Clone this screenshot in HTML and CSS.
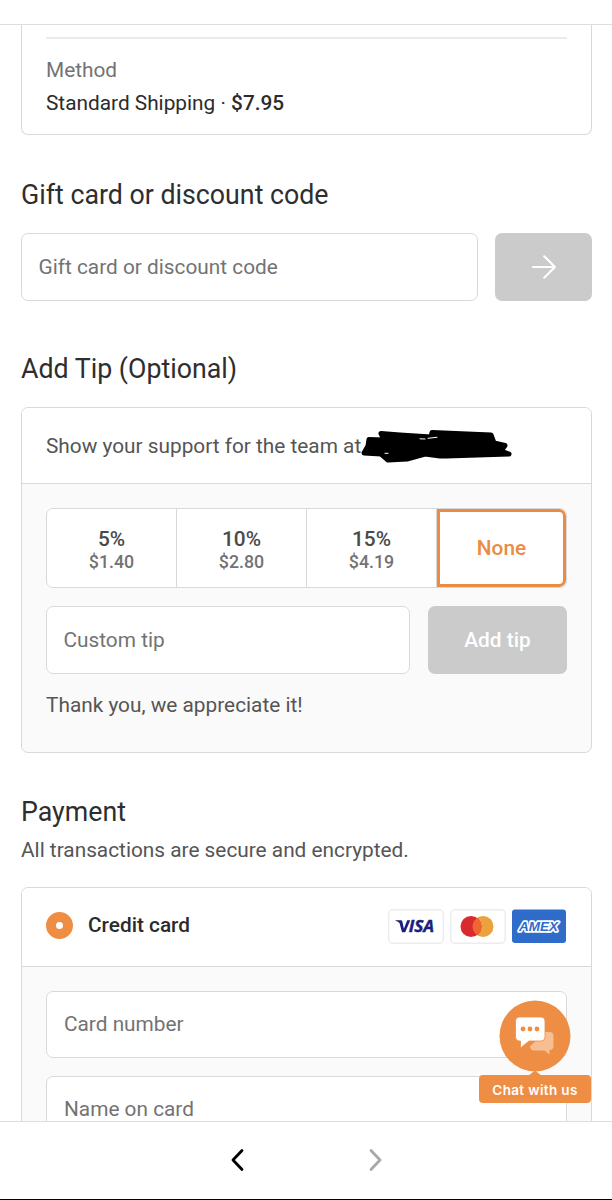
FILE: index.html
```html
<!DOCTYPE html>
<html lang="en">
<head>
<meta charset="utf-8">
<title>Checkout</title>
<link rel="stylesheet" href="styles.css">
</head>
<body>
<div class="screen">
  <div class="topbar"></div>
  <main class="content">
    <section class="shipping">
      <div class="divider"></div>
      <div class="label">Method</div>
      <div class="value">Standard Shipping · <b>$7.95</b></div>
    </section>

    <h2 class="heading gift-heading">Gift card or discount code</h2>
    <div class="row">
      <div class="field">Gift card or discount code</div>
      <button class="btn apply" aria-label="Apply">
        <svg width="26" height="26" viewBox="0 0 26 26" fill="none" stroke="#fff" stroke-width="2.200" stroke-linecap="round" stroke-linejoin="round"><path d="M2 13H24M13.200 2.300L24 13L13.200 23.700"/></svg>
      </button>
    </div>

    <h2 class="heading tip-heading">Add Tip (Optional)</h2>
    <section class="panel tip">
      <div class="tip-head"><span>Show your support for the team at</span>
        <svg class="scribble" width="152" height="34" viewBox="361 429 152 34" fill="none" stroke="#000" stroke-linecap="round" stroke-linejoin="round"><path stroke-width="5" d="M364 453L368 446L369 439.500L384 440L381 433.500L400 435L431 437L432 432.500L491 435L494 443L505 445.500L501 451L509 454L446 456L440 456L425 454L407 459L388 460L381 454Z" fill="#000"/><path stroke="#fff" stroke-width="1" d="M420 438.800L425 439M428 438.300L437 437.300M385 453.300H388"/></svg>
      </div>
      <div class="tip-body">
        <div class="segments">
          <div class="seg"><b>5%</b><span>$1.40</span></div>
          <div class="seg"><b>10%</b><span>$2.80</span></div>
          <div class="seg"><b>15%</b><span>$4.19</span></div>
          <div class="seg active">None</div>
        </div>
        <div class="row custom">
          <div class="field">Custom tip</div>
          <button class="btn add">Add tip</button>
        </div>
        <p class="thanks">Thank you, we appreciate it!</p>
      </div>
    </section>

    <h2 class="heading pay-heading">Payment</h2>
    <p class="sub">All transactions are secure and encrypted.</p>
    <section class="panel pay">
      <div class="pay-head">
        <span class="radio"></span>
        <span class="pay-name">Credit card</span>
        <div class="brands">
          <svg width="56" height="35" viewBox="0 0 56 35"><rect x=".75" y=".75" width="54.500" height="33.500" rx="4" fill="#fff" stroke="#ececef" stroke-width="1.500"/><path d="M7.500 11.300H13Q14 11.300 14.300 12.200L15.900 19.700L19.200 11.300H22.300L17.200 23.200H14L11.500 13.900Q10.300 12.500 7.500 11.800Z" fill="#1a1f80"/><text class="visa" x="20.700" y="23.300" textLength="25.500" lengthAdjust="spacingAndGlyphs">ISA</text></svg>
          <svg width="56" height="35" viewBox="0 0 56 35"><rect x=".75" y=".75" width="54.500" height="33.500" rx="4" fill="#fff" stroke="#ececef" stroke-width="1.500"/><circle cx="33" cy="17.500" r="10.500" fill="#eba13d"/><circle cx="21" cy="17.500" r="10.500" fill="#d92b2e"/><path d="M27 8.900A10.500 10.500 0 0 1 27 26.100A10.500 10.500 0 0 1 27 8.900Z" fill="#ef6630"/></svg>
          <svg width="54" height="35" viewBox="0 0 54 35"><rect y=".5" width="54" height="33.500" rx="3" fill="#2f6bc9"/><text class="amex outline" x="7" y="22" textLength="39" lengthAdjust="spacingAndGlyphs">AMEX</text></svg>
        </div>
      </div>
      <div class="pay-body">
        <div class="field card">Card number</div>
        <div class="field card">Name on card</div>
      </div>
    </section>
  </main>
  <nav class="bottombar">
    <svg width="14" height="24" viewBox="0 0 14 24" fill="none" stroke="#000" stroke-width="2.800" stroke-linecap="round" stroke-linejoin="round"><path d="M12 2.500L3 12L12 21.500"/></svg>
    <svg width="14" height="24" viewBox="0 0 14 24" fill="none" stroke="#a8a8a8" stroke-width="2.800" stroke-linecap="round" stroke-linejoin="round"><path d="M2 2.500L11 12L2 21.500"/></svg>
  </nav>
  <div class="chat">
    <svg width="72" height="75" viewBox="0 0 72 75"><circle cx="36" cy="36" r="35.500" fill="#ee8e45"/><path d="M29 76L36 70.500L43 76Z" fill="#ee8e45"/><path d="M46 32H50.500Q54.500 32 54.500 36V46Q54.500 50 50.500 50V54.500L45.500 50.500H35Q31.500 50.500 31 46.500Z" fill="#f7be92"/><path d="M20.500 17H42Q46 17 46 21V37Q46 41 42 41H30L21.500 48V41H20.500Q16.500 41 16.500 37V21Q16.500 17 20.500 17Z" fill="#fff" stroke="#ee8e45" stroke-width=".8"/><g fill="#ee8e45"><circle cx="24" cy="29" r="2.400"/><circle cx="31" cy="29" r="2.400"/><circle cx="38" cy="29" r="2.400"/></g></svg>
    <div class="chat-label">Chat with us</div>
  </div>
</div>
</body>
</html>
```
FILE: styles.css
```css
* { box-sizing: border-box; }
body { margin: 0; background: #fff; font-family: Roboto, "Liberation Sans", sans-serif; font-size: 20.820px; color: #2b2b2b; }
h2, p { margin: 0; }
b { font-weight: 500; }
.screen { position: relative; width: 612px; height: 1200px; display: flex; flex-direction: column; overflow: hidden; }
.topbar { height: 25px; flex: none; border-bottom: 1px solid #dedede; }
.content { flex: 1; min-height: 0; overflow: hidden; padding: 0 20px 0 21px; }
.shipping { height: 110px; border: 1px solid #d9d9d9; border-top: 0; border-radius: 0 0 7px 7px; padding: 12px 24px 0; }
.divider { height: 2px; background: #ebebeb; margin-bottom: 15px; }
.label, .value { line-height: 33px; }
.label { color: #737373; }
.heading { font-size: 26.750px; font-weight: 400; line-height: 32px; color: #2e2e2e; }
.gift-heading { margin: 44px 0 22px; }
.row { display: flex; gap: 17px; }
.field { flex: 1; height: 68px; display: flex; align-items: center; padding: 0 16.500px 1px; background: #fff; border: 1px solid #d9d9d9; border-radius: 7px; color: #737373; }
.btn { height: 68px; padding: 0; border: 0; border-radius: 7px; background: #cbcbcb; color: #fff; font: 500 20.820px Roboto, sans-serif; display: flex; align-items: center; justify-content: center; }
.apply { width: 97px; }
.tip-heading { margin: 52px 0 22px; }
.panel { border: 1px solid #d9d9d9; border-radius: 7px; background: #fafafa; overflow: hidden; }
.tip { height: 346px; }
.tip-head { height: 76px; padding-left: 24px; display: flex; align-items: center; background: #fff; border-bottom: 1px solid #d9d9d9; color: #555; white-space: nowrap; }
.scribble { flex: none; }
.tip-body { padding: 24px; }
.segments { height: 80px; display: grid; grid-template-columns: 130px 130px 130px 1fr; border: 1px solid #d9d9d9; border-radius: 7px; background: #fff; }
.seg { display: flex; flex-direction: column; align-items: center; justify-content: center; border-right: 1px solid #d9d9d9; color: #4a4a4a; line-height: 23px; padding-top: 2px; }
.seg b { line-height: 24px; }
.seg span { font-size: 17.800px; line-height: 21px; font-weight: 500; color: #737373; }
.seg.active { border: 3px solid #ea8c46; border-radius: 0 7px 7px 0; color: #ea8c46; font-weight: 500; padding: 0; }
.custom { margin-top: 18px; gap: 18px; }
.add { width: 139px; padding-bottom: 1px; }
.thanks { margin-top: 15px; line-height: 32px; color: #555; }
.pay-heading { margin-top: 43px; }
.sub { margin-top: 6px; line-height: 32px; color: #555; }
.pay { margin-top: 21px; height: 300px; }
.pay-head { height: 79px; padding: 0 24px; display: flex; align-items: center; background: #fff; border-bottom: 1px solid #d9d9d9; }
.radio { width: 27px; height: 27px; margin-top: -4px; border: 10.500px solid #ee8e45; border-radius: 50%; background: #fff; }
.pay-name { margin: -4px 0 0 15px; font-weight: 500; }
.brands { margin: -2px 1px 0 auto; display: flex; gap: 6px; }
.visa { font: italic 700 16.500px "Open Sans", sans-serif; fill: #1a1f80; stroke: #1a1f80; stroke-width: .4px; }
.amex { font: italic 700 13.500px "Liberation Sans", sans-serif; fill: #2f6bc9; }
.outline { stroke: #fff; stroke-width: 3.400px; stroke-linejoin: round; paint-order: stroke; }
.pay-body { padding: 24px; display: flex; flex-direction: column; gap: 18px; }
.card { flex: none; height: 67px; padding: 0 17px 2px; }
.bottombar { height: 79px; flex: none; display: flex; justify-content: center; align-items: center; gap: 125px; padding: 0 0 1px 0; border-top: 1px solid #dedede; border-bottom: 1px solid #000; background: #fff; }
.chat { position: absolute; left: 479px; top: 1000px; width: 112px; display: flex; flex-direction: column; align-items: center; }
.chat-label { width: 112px; height: 28px; border-radius: 4px; background: #ee8e45; color: #fff; font: 600 13.500px/30px Inter, sans-serif; letter-spacing: .35px; text-align: center; }
```
